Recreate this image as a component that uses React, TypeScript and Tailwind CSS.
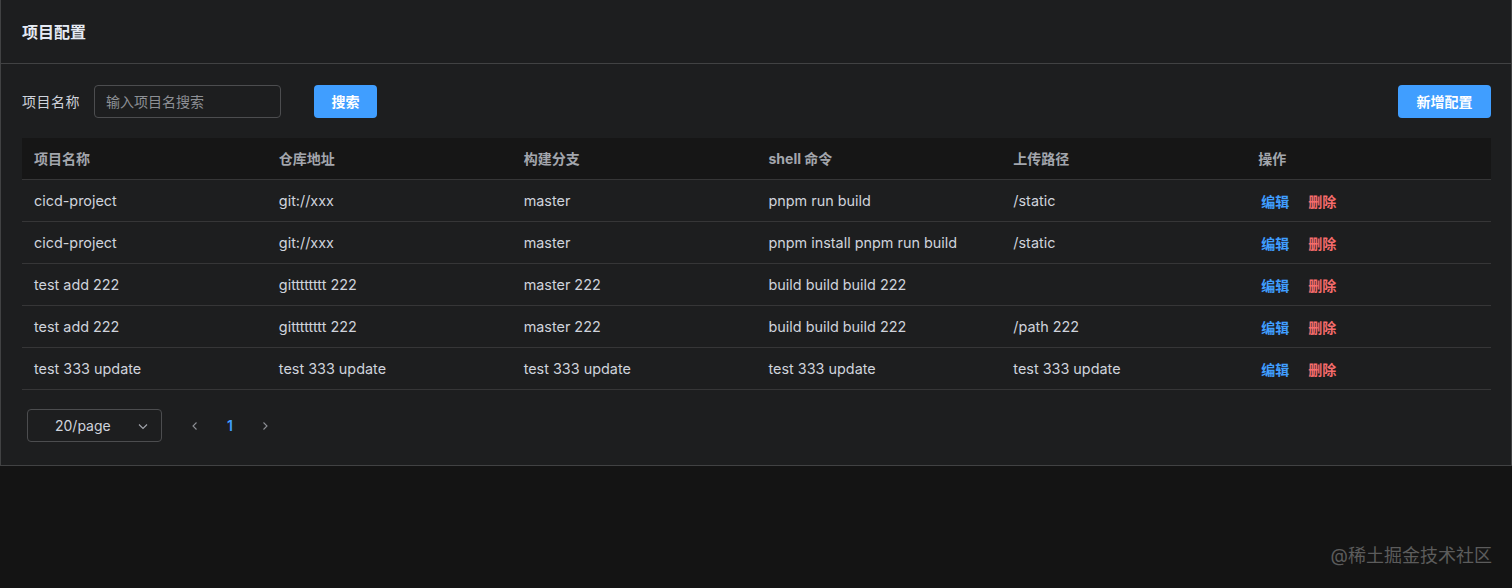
import React from "react";

const rows = [
  ["cicd-project", "git://xxx", "master", "pnpm run build", "/static"],
  ["cicd-project", "git://xxx", "master", "pnpm install pnpm run build", "/static"],
  ["test add 222", "gitttttttt 222", "master 222", "build build build 222", ""],
  ["test add 222", "gitttttttt 222", "master 222", "build build build 222", "/path 222"],
  ["test 333 update", "test 333 update", "test 333 update", "test 333 update", "test 333 update"],
];

const headers = ["项目名称", "仓库地址", "构建分支", "shell 命令", "上传路径", "操作"];

export default function App() {
  return (
    <div
      className="relative w-[1512px] h-[588px] bg-[#141414] overflow-hidden"
      style={{ fontFamily: 'Inter, "Noto Sans CJK SC", sans-serif' }}
    >
      <div className="bg-[#1d1e1f] border border-t-0 border-[#414243] h-[466px] flex flex-col">
        <div className="h-[64px] border-b border-[#414243] flex items-center px-[21px] pt-[1px]">
          <span className="text-[16px] font-bold text-[#e5eaf3]">项目配置</span>
        </div>
        <div className="pl-[21px] pr-[20px] pt-[21px] flex flex-col">
          <div className="flex items-center h-[33px]">
            <span className="text-[14px] tracking-[0.5px] text-[#cfd3dc]">项目名称</span>
            <div className="ml-[14px] w-[187px] h-[33px] border border-[#4c4d4f] rounded-[4px] flex items-center px-[11px]">
              <span className="text-[14px] text-[#8d9095]">输入项目名搜索</span>
            </div>
            <button className="ml-[33px] w-[63px] h-[33px] rounded-[4px] bg-[#409eff] text-white text-[14px] font-bold flex items-center justify-center">
              搜索
            </button>
            <div className="flex-1" />
            <button className="w-[93px] h-[33px] rounded-[4px] bg-[#409eff] text-white text-[14px] font-bold flex items-center justify-center">
              新增配置
            </button>
          </div>
          <div className="mt-[20px] w-[1469px]">
            <div className="grid grid-cols-6 h-[42px] bg-[#161616] border-b border-[#363637]">
              {headers.map((h) => (
                <div key={h} className="flex items-center px-[12px] text-[14px] font-bold text-[#a3a6ad]">
                  {h}
                </div>
              ))}
            </div>
            {rows.map((r, i) => (
              <div key={i} className="grid grid-cols-6 h-[42px] border-b border-[#363637]">
                {r.map((c, j) => (
                  <div key={j} className="flex items-center px-[12px] text-[14.4px] text-[#cfd3dc] whitespace-nowrap">
                    {c}
                  </div>
                ))}
                <div className="flex items-center px-[12px] pt-[2px] text-[14px] font-semibold">
                  <span className="ml-[3px] text-[#409eff]">编辑</span>
                  <span className="ml-[19px] text-[#f56c6c]">删除</span>
                </div>
              </div>
            ))}
          </div>
          <div className="mt-[19px] flex items-center pl-[5px]">
            <div className="w-[135px] h-[33px] border border-[#4c4d4f] rounded-[4px] flex items-center pl-[27px] pr-[12px]">
              <span className="text-[14px] text-[#cfd3dc]">20/page</span>
              <div className="flex-1" />
              <svg width="12" height="12" viewBox="0 0 12 12" fill="none" stroke="#a3a6ad" strokeWidth="1.1">
                <path d="M2 4.5 L6 8.5 L10 4.5" />
              </svg>
            </div>
            <div className="ml-[17px] w-[32px] h-[32px] flex items-center justify-center">
              <svg width="10" height="10" viewBox="0 0 10 10" fill="none" stroke="#8d9095" strokeWidth="1.1">
                <path d="M6.5 1.5 L3 5 L6.5 8.5" />
              </svg>
            </div>
            <div className="ml-[3px] w-[32px] h-[32px] flex items-center justify-center text-[14px] font-semibold text-[#409eff]">
              1
            </div>
            <div className="ml-[3px] w-[32px] h-[32px] flex items-center justify-center">
              <svg width="10" height="10" viewBox="0 0 10 10" fill="none" stroke="#8d9095" strokeWidth="1.1">
                <path d="M3.5 1.5 L7 5 L3.5 8.5" />
              </svg>
            </div>
          </div>
        </div>
      </div>
      <div className="absolute right-[20px] bottom-[19px] text-[18px] text-[#5c5c5c]">@稀土掘金技术社区</div>
    </div>
  );
}
